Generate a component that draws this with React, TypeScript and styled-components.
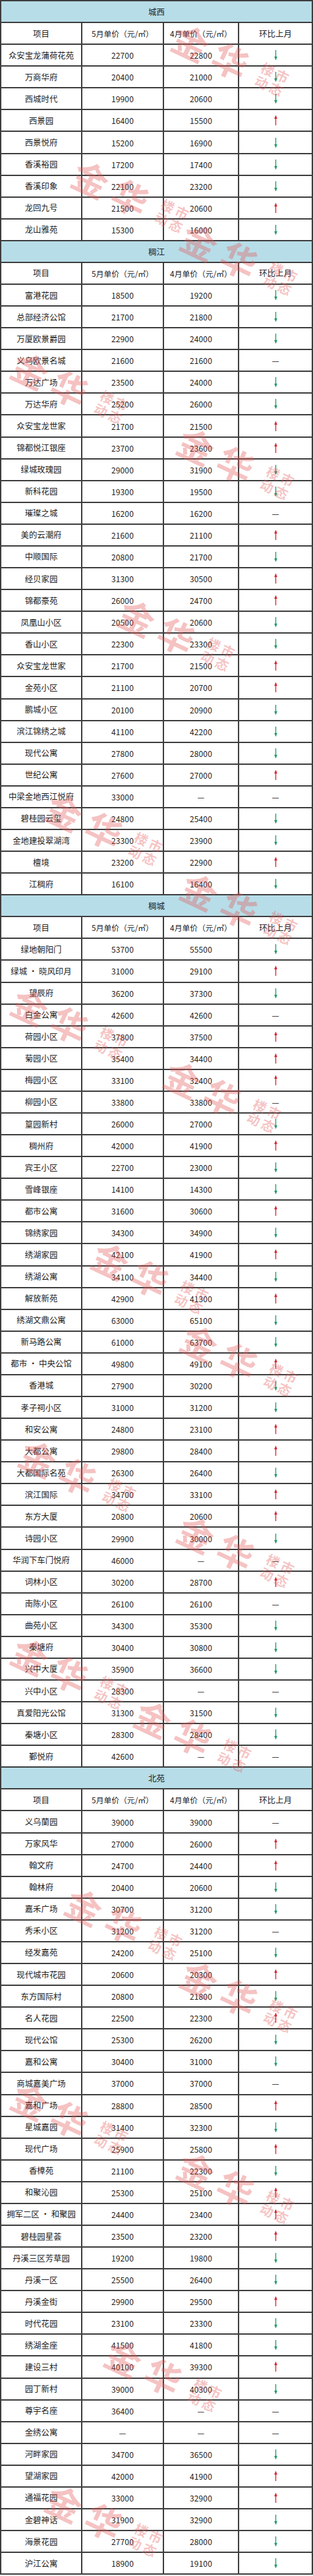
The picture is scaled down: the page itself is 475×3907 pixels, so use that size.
import * as React from 'react';
import styled, { createGlobalStyle } from 'styled-components';

type Trend = 'u' | 'd' | '-';
type Item = [string, string, string, Trend];
type Section = { title: string; rows: Item[] };

const ROW_H = 33.09;
const LINE = '#3d3d3d';

const sections: Section[] = [
	{
		title: '城西',
		rows: [
			['众安宝龙蒲荷花苑', '22700', '22800', 'd'],
			['万商华府', '20400', '21000', 'd'],
			['西城时代', '19900', '20600', 'd'],
			['西景园', '16400', '15500', 'u'],
			['西景悦府', '15200', '16900', 'd'],
			['香溪裕园', '17200', '17400', 'd'],
			['香溪印象', '22100', '23200', 'd'],
			['龙回九号', '21500', '20600', 'u'],
			['龙山雅苑', '15300', '16000', 'd'],
		],
	},
	{
		title: '稠江',
		rows: [
			['富港花园', '18500', '19200', 'd'],
			['总部经济公馆', '21700', '21800', 'd'],
			['万厦欧景爵园', '22900', '24000', 'd'],
			['义乌欧景名城', '21600', '21600', '-'],
			['万达广场', '23500', '24000', 'd'],
			['万达华府', '25200', '26000', 'd'],
			['众安宝龙世家', '21700', '21500', 'u'],
			['锦都悦江银座', '23700', '23600', 'u'],
			['绿城玫瑰园', '29000', '31900', 'd'],
			['新科花园', '19300', '19500', 'd'],
			['璀璨之城', '16200', '16200', '-'],
			['美的云潮府', '21600', '21100', 'u'],
			['中顺国际', '20800', '21700', 'd'],
			['经贝家园', '31300', '30500', 'u'],
			['锦都豪苑', '26000', '24700', 'u'],
			['凤凰山小区', '20500', '20600', 'd'],
			['香山小区', '22300', '23300', 'd'],
			['众安宝龙世家', '21700', '21500', 'u'],
			['金苑小区', '21100', '20700', 'u'],
			['鹏城小区', '20100', '20900', 'd'],
			['滨江锦绣之城', '41100', '42200', 'd'],
			['现代公寓', '27800', '28000', 'd'],
			['世纪公寓', '27600', '27000', 'u'],
			['中梁金地西江悦府', '33000', '—', '-'],
			['碧桂园云玺', '24800', '25400', 'd'],
			['金地建投翠湖湾', '23300', '23900', 'd'],
			['檀境', '23200', '22900', 'u'],
			['江稠府', '16100', '16400', 'd'],
		],
	},
	{
		title: '稠城',
		rows: [
			['绿地朝阳门', '53700', '55500', 'd'],
			['绿城 · 晓风印月', '31000', '29100', 'u'],
			['望辰府', '36200', '37300', 'd'],
			['白金公寓', '42600', '42600', '-'],
			['荷园小区', '37800', '37500', 'u'],
			['菊园小区', '35400', '34400', 'u'],
			['梅园小区', '33100', '32400', 'u'],
			['柳园小区', '33800', '33800', '-'],
			['篁园新村', '26000', '27000', 'd'],
			['稠州府', '42000', '41900', 'u'],
			['宾王小区', '22700', '23000', 'd'],
			['雪峰银座', '14100', '14300', 'd'],
			['都市公寓', '31600', '30600', 'u'],
			['锦绣家园', '34300', '34900', 'd'],
			['绣湖家园', '42100', '41900', 'u'],
			['绣湖公寓', '34100', '34400', 'd'],
			['解放新苑', '42900', '41300', 'u'],
			['绣湖文鼎公寓', '63000', '65100', 'd'],
			['新马路公寓', '61000', '63700', 'd'],
			['都市 · 中央公馆', '49800', '49100', 'u'],
			['香港城', '27900', '30200', 'd'],
			['孝子祠小区', '31000', '31200', 'd'],
			['和安公寓', '24800', '23100', 'u'],
			['大都公寓', '29800', '28400', 'u'],
			['大都国际名苑', '26300', '26400', 'd'],
			['滨江国际', '34700', '33100', 'u'],
			['东方大厦', '20800', '20600', 'u'],
			['诗园小区', '29900', '30000', 'd'],
			['华润下车门悦府', '46000', '—', '-'],
			['词林小区', '30200', '28700', 'u'],
			['南陈小区', '26100', '26100', '-'],
			['曲苑小区', '34300', '35300', 'd'],
			['秦塘府', '30400', '30800', 'd'],
			['兴中大厦', '35900', '36600', 'd'],
			['兴中小区', '28300', '—', '-'],
			['真爱阳光公馆', '31300', '31500', 'd'],
			['秦塘小区', '28300', '28400', 'd'],
			['鄞悦府', '42600', '—', '-'],
		],
	},
	{
		title: '北苑',
		rows: [
			['义乌蘭园', '39000', '39000', '-'],
			['万家风华', '27000', '26000', 'u'],
			['翰文府', '24700', '24400', 'u'],
			['翰林府', '20400', '20600', 'd'],
			['嘉禾广场', '30700', '31200', 'd'],
			['秀禾小区', '31200', '31200', '-'],
			['经发嘉苑', '24200', '25100', 'd'],
			['现代城市花园', '20600', '20300', 'u'],
			['东方国际村', '20800', '21800', 'd'],
			['名人花园', '22500', '22300', 'u'],
			['现代公馆', '25300', '26200', 'd'],
			['嘉和公寓', '30400', '31000', 'd'],
			['商城嘉美广场', '37000', '37000', '-'],
			['嘉和广场', '28800', '28500', 'u'],
			['星城嘉园', '31400', '32300', 'd'],
			['现代广场', '25900', '25800', 'u'],
			['香樟苑', '21100', '22300', 'd'],
			['和聚沁园', '25300', '25100', 'u'],
			['拥军二区 · 和聚园', '24400', '23400', 'u'],
			['碧桂园星荟', '23500', '23200', 'u'],
			['丹溪三区芳草园', '19200', '19800', 'd'],
			['丹溪一区', '25500', '26400', 'd'],
			['丹溪金街', '29900', '29500', 'u'],
			['时代花园', '23100', '23300', 'd'],
			['绣湖金座', '41500', '41800', 'd'],
			['建设三村', '40100', '39300', 'u'],
			['园丁新村', '39000', '40300', 'd'],
			['尊宇名座', '36400', '—', '-'],
			['金绣公寓', '—', '—', '-'],
			['河畔家园', '34700', '36500', 'd'],
			['望湖家园', '42000', '41900', 'u'],
			['通福花园', '33000', '32900', 'u'],
			['金碧神话', '31900', '32900', 'd'],
			['海景花园', '27700', '28000', 'd'],
			['沪江公寓', '18900', '19100', 'd'],
		],
	},
];

// centre of the big 金华 of each watermark stamp, kept inside the page
const stamps: [number, number][] = [
	[322, 78], [170, 285], [335, 380], [78, 575], [330, 690], [240, 950],
	[130, 1245], [335, 1365], [78, 1540], [310, 1650], [200, 1925], [335, 2050],
	[90, 2225], [330, 2340], [78, 2525], [265, 2620], [160, 2905], [335, 3015],
	[78, 3200], [330, 3305], [220, 3590], [130, 3810],
];

const Arrow = ({ dir }: { dir: 'u' | 'd' }) => (
	<svg width="7" height="15" viewBox="0 0 7 15">
		{dir === 'u' ? (
			<g fill="#d8212b" stroke="#d8212b">
				<line x1="3.5" y1="4" x2="3.5" y2="15" strokeWidth="1.3" />
				<polygon points="3.5,0 1.5,5 5.5,5" strokeWidth="0.4" />
			</g>
		) : (
			<g fill="#1c9a62" stroke="#1c9a62">
				<line x1="3.5" y1="0" x2="3.5" y2="11" strokeWidth="1.3" />
				<polygon points="3.5,15 1.5,10 5.5,10" strokeWidth="0.4" />
			</g>
		)}
	</svg>
);

const App = () => {
	return (
		<Page>
			<GlobalStyle />
			<Sheet>
				{sections.map((section, si) => (
					<React.Fragment key={si}>
						<SectionTitle>{section.title}</SectionTitle>
						<Row>
							<Cell>项目</Cell>
							<Cell $head>5月单价（元/㎡）</Cell>
							<Cell $head>4月单价（元/㎡）</Cell>
							<Cell>环比上月</Cell>
						</Row>
						{section.rows.map(([name, may, apr, trend], ri) => (
							<Row key={ri}>
								<Cell>{name}</Cell>
								<Cell $num>{may}</Cell>
								<Cell $num>{apr}</Cell>
								<Cell>{trend === '-' ? <Dash>—</Dash> : <Arrow dir={trend} />}</Cell>
							</Row>
						))}
					</React.Fragment>
				))}
			</Sheet>
			<WatermarkLayer>
				{stamps.map(([x, y], i) => (
					<Stamp key={i} $x={x} $y={y}>
						<StampBig>金华</StampBig>
						<StampSmall>
							<span>楼市</span>
							<span>动态</span>
						</StampSmall>
					</Stamp>
				))}
			</WatermarkLayer>
		</Page>
	);
};

export default App;

const GlobalStyle = createGlobalStyle`
	html, body {
		margin: 0;
		padding: 0;
		background: #ffffff;
	}
	body {
		font-family: "Noto Sans CJK SC", "Noto Sans", sans-serif;
		color: #1d1d1d;
	}
`;

const Page = styled.div`
	position: relative;
	width: 475px;
	overflow: hidden;
`;

const Sheet = styled.div`
	border-top: 2px solid ${LINE};
	border-left: 2px solid ${LINE};
	border-right: 2px solid ${LINE};
`;

const SectionTitle = styled.div`
	box-sizing: border-box;
	height: ${ROW_H}px;
	display: flex;
	align-items: center;
	justify-content: center;
	background: #b7dde8;
	border-bottom: 2px solid ${LINE};
	font-size: 12.5px;
	color: #222;
`;

const Row = styled.div`
	box-sizing: border-box;
	height: ${ROW_H}px;
	display: grid;
	grid-template-columns: 123px 124px 114px 1fr;
	border-bottom: 2px solid ${LINE};
	background: #ffffff;
`;

const Cell = styled.div<{ $num?: boolean; $head?: boolean }>`
	display: flex;
	align-items: center;
	justify-content: center;
	white-space: nowrap;
	font-size: ${(p) => (p.$num ? '12px' : p.$head ? '11.8px' : '12.4px')};
	letter-spacing: ${(p) => (p.$num ? '0.1px' : '0')};
	color: #222;
	&:not(:last-child) {
		border-right: 2px solid ${LINE};
	}
`;

const Dash = styled.span`
	font-size: 12.5px;
	color: #111;
`;

const WatermarkLayer = styled.div`
	position: absolute;
	inset: 0;
	pointer-events: none;
	overflow: hidden;
`;

const Stamp = styled.div.attrs<{ $x: number; $y: number }>((p) => ({
	style: { left: `${p.$x - 62}px`, top: `${p.$y - 32}px` },
}))<{ $x: number; $y: number }>`
	position: absolute;
	display: flex;
	align-items: center;
	gap: 8px;
	transform-origin: 62px 32px;
	transform: rotate(25deg);
	color: rgba(226, 86, 86, 0.36);
	white-space: nowrap;
`;

const StampBig = styled.div`
	font-size: 54px;
	font-weight: 700;
	letter-spacing: 12px;
	line-height: 64px;
`;

const StampSmall = styled.div`
	display: flex;
	flex-direction: column;
	font-size: 20px;
	font-weight: 700;
	line-height: 22px;
	letter-spacing: 4px;
`;
